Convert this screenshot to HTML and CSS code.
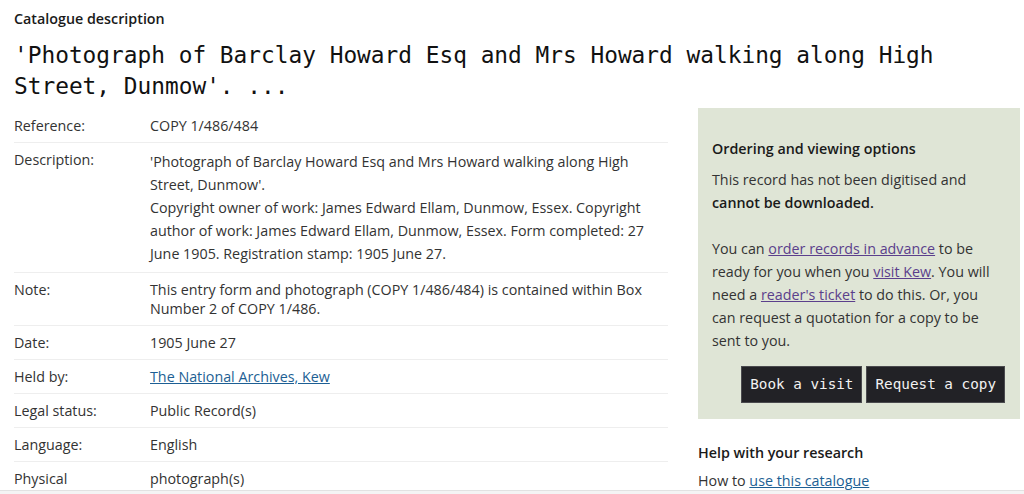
FILE: index.html
```html
<!DOCTYPE html>
<html lang="en">
<head>
<meta charset="utf-8">
<title>Catalogue description</title>
<link rel="stylesheet" href="styles.css">
</head>
<body>
<div class="page">
  <p class="eyebrow">Catalogue description</p>
  <h1 class="title">'Photograph of Barclay Howard Esq and Mrs Howard walking along High Street, Dunmow'. ...</h1>
  <div class="layout">
    <div class="details">
      <div class="row"><div class="label">Reference:</div><div class="value">COPY 1/486/484</div></div>
      <div class="row"><div class="label">Description:</div><div class="value"><p>'Photograph of Barclay Howard Esq and Mrs Howard walking along High Street, Dunmow'.</p><p>Copyright owner of work: James Edward Ellam, Dunmow, Essex. Copyright author of work: James Edward Ellam, Dunmow, Essex. Form completed: 27 June 1905. Registration stamp: 1905 June 27.</p></div></div>
      <div class="row"><div class="label">Note:</div><div class="value">This entry form and photograph (COPY 1/486/484) is contained within Box Number 2 of COPY 1/486.</div></div>
      <div class="row"><div class="label">Date:</div><div class="value">1905 June 27</div></div>
      <div class="row"><div class="label">Held by:</div><div class="value"><a class="link" href="#">The National Archives, Kew</a></div></div>
      <div class="row"><div class="label">Legal status:</div><div class="value">Public Record(s)</div></div>
      <div class="row"><div class="label">Language:</div><div class="value">English</div></div>
      <div class="row"><div class="label">Physical</div><div class="value">photograph(s)</div></div>
    </div>
    <aside class="sidebar">
      <div class="options">
        <h3 class="box-title">Ordering and viewing options</h3>
        <p class="box-text">This record has not been digitised and <strong>cannot be downloaded.</strong></p>
        <p class="box-text">You can <a class="visited" href="#">order records in advance</a> to be ready for you when you <a class="visited" href="#">visit Kew</a>. You will need a <a class="visited" href="#">reader's ticket</a> to do this. Or, you can request a quotation for a copy to be sent to you.</p>
        <div class="actions">
          <a class="btn" href="#">Book a visit</a>
          <a class="btn" href="#">Request a copy</a>
        </div>
      </div>
      <h3 class="help-title">Help with your research</h3>
      <p class="help-text">How to <a class="link" href="#">use this catalogue</a></p>
    </aside>
  </div>
</div>
<div class="bottom-edge"></div>
</body>
</html>
```
FILE: styles.css
```css
html, body {
  margin: 0;
  padding: 0;
  background: #ffffff;
}
body {
  font-family: "Open Sans", "Liberation Sans", sans-serif;
  font-size: 14.3px;
  line-height: 23px;
  color: #333333;
  overflow: hidden;
}
.page {
  padding: 0 4px 0 14px;
}
.eyebrow {
  margin: 0;
  padding-top: 7px;
  font-weight: 600;
  color: #1a1a1a;
}
.title {
  margin: 10px 0 6px;
  font-family: "DejaVu Sans Mono", "Liberation Mono", monospace;
  font-weight: normal;
  font-size: 22.8px;
  line-height: 31px;
  color: #111111;
}
.layout {
  display: grid;
  grid-template-columns: 654px 322px;
  column-gap: 30px;
  align-items: start;
}
.details {
  padding-top: 1px;
}
.row {
  display: grid;
  grid-template-columns: 136px 1fr;
  padding: 7px 0 6.5px;
  line-height: 19.5px;
  border-bottom: 1px solid #eeeeee;
}
.value p {
  margin: 0;
  line-height: 23px;
}
.link {
  color: #1d5f94;
  text-decoration: underline;
}
.visited {
  color: #5b3f8c;
  text-decoration: underline;
}
.options {
  background: #dfe5d6;
  padding: 29px 16px 16px 14px;
}
.box-title {
  margin: 0 0 8px;
  font-size: 14.3px;
  font-weight: 600;
  color: #1a1a1a;
}
.box-text {
  margin: 0 0 23px;
}
.box-text strong {
  font-weight: 600;
  color: #1a1a1a;
}
.box-text:last-of-type {
  margin-bottom: 14px;
}
.actions {
  display: flex;
  justify-content: flex-end;
  gap: 4px;
  margin-right: -1px;
}
.btn {
  display: inline-block;
  background: #222226;
  border: 1px solid #4a4a4e;
  color: #f2f2f2;
  font-family: "DejaVu Sans Mono", "Liberation Mono", monospace;
  font-size: 14.3px;
  line-height: 35px;
  padding: 0 8px;
  text-decoration: none;
}
.help-title {
  margin: 22px 0 5px;
  font-size: 14.3px;
  font-weight: 600;
  color: #1a1a1a;
}
.help-text {
  margin: 0;
}
.bottom-edge {
  position: fixed;
  left: 0;
  right: 0;
  bottom: 0;
  height: 3px;
  background: #f4f4f4;
  border-top: 1px solid #e2e2e2;
}
```
